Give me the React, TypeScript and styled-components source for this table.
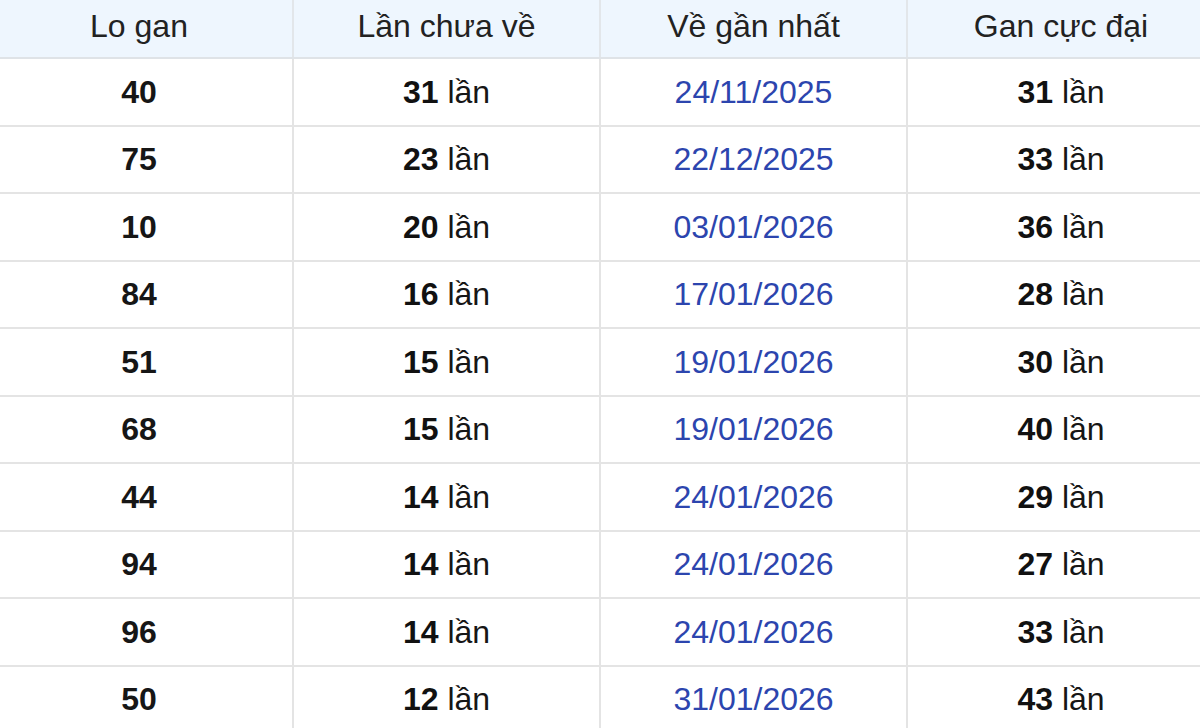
import styled, { createGlobalStyle } from 'styled-components';

const GlobalStyle = createGlobalStyle`
    html, body {
        margin: 0;
        padding: 0;
        background: #ffffff;
        overflow: hidden;
    }
    body {
        font-family: "Liberation Sans", Arial, sans-serif;
    }
`;

type Row = { lo: string; chua: number; date: string; max: number };

const rows: Row[] = [
    { lo: '40', chua: 31, date: '24/11/2025', max: 31 },
    { lo: '75', chua: 23, date: '22/12/2025', max: 33 },
    { lo: '10', chua: 20, date: '03/01/2026', max: 36 },
    { lo: '84', chua: 16, date: '17/01/2026', max: 28 },
    { lo: '51', chua: 15, date: '19/01/2026', max: 30 },
    { lo: '68', chua: 15, date: '19/01/2026', max: 40 },
    { lo: '44', chua: 14, date: '24/01/2026', max: 29 },
    { lo: '94', chua: 14, date: '24/01/2026', max: 27 },
    { lo: '96', chua: 14, date: '24/01/2026', max: 33 },
    { lo: '50', chua: 12, date: '31/01/2026', max: 43 },
];

function Count({ n }: { n: number }) {
    return (
        <>
            <b>{n}</b> lần
        </>
    );
}

export default function App() {
    return (
        <>
            <GlobalStyle />
            <Wrap>
                <Table>
                    <thead>
                        <tr>
                            <Th>Lo gan</Th>
                            <Th>Lần chưa về</Th>
                            <Th>Về gần nhất</Th>
                            <Th>Gan cực đại</Th>
                        </tr>
                    </thead>
                    <tbody>
                        {rows.map((r, i) => (
                            <Tr key={i}>
                                <Td $bold>{r.lo}</Td>
                                <Td><Count n={r.chua} /></Td>
                                <Td $date>{r.date}</Td>
                                <Td><Count n={r.max} /></Td>
                            </Tr>
                        ))}
                    </tbody>
                </Table>
            </Wrap>
        </>
    );
}

const Wrap = styled.div`
    width: 1200px;
    height: 728px;
    overflow: hidden;
`;

const Table = styled.table`
    margin-left: -14px;
    width: 1228px;
    border-collapse: collapse;
    table-layout: fixed;
    font-size: 32px;
    line-height: 1;
    color: #161616;
`;

const Th = styled.th`
    height: 58px;
    padding: 0 0 5px;
    box-sizing: border-box;
    background: #eef6fe;
    font-weight: 400;
    color: #222;
    text-align: center;
    vertical-align: middle;
    border-left: 2px solid #e2e6ea;
    border-bottom: 2px solid #dfe3e7;
    &:first-child {
        border-left: none;
    }
`;

const Tr = styled.tr`
    height: 67.5px;
`;

const Td = styled.td<{ $bold?: boolean; $date?: boolean }>`
    padding: 0;
    text-align: center;
    vertical-align: middle;
    border-left: 2px solid #e4e4e4;
    border-bottom: 2px solid #e4e4e4;
    font-weight: ${p => (p.$bold ? 700 : 400)};
    color: ${p => (p.$date ? '#2c45ae' : '#161616')};
    &:first-child {
        border-left: none;
    }
    b {
        font-weight: 700;
        color: #111;
    }
`;
